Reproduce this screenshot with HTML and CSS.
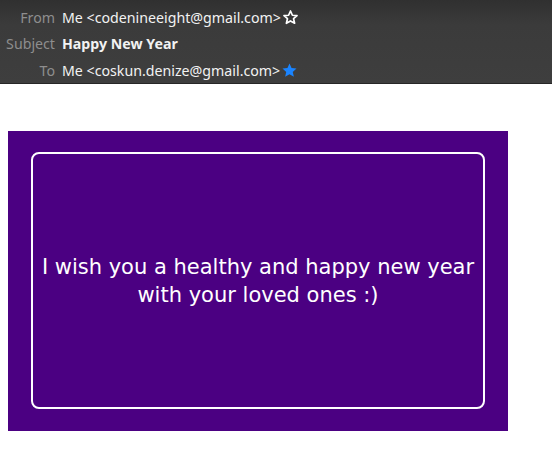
FILE: index.html
```html
<!DOCTYPE html>
<html>
<head>
<meta charset="utf-8">
<link rel="stylesheet" href="styles.css">
</head>
<body>
<header class="mail-header">
  <div class="row">
    <span class="label">From</span>
    <span class="value">Me &lt;codenineeight@gmail.com&gt;</span>
    <svg class="star" viewBox="0 0 24 24" width="17" height="17"><path d="M12 2.8l2.7 6 6.5.6-4.9 4.3 1.5 6.4L12 16.8l-5.8 3.3 1.5-6.4-4.9-4.3 6.5-.6z" fill="none" stroke="#ffffff" stroke-width="2.4" stroke-linejoin="round"/></svg>
  </div>
  <div class="row">
    <span class="label">Subject</span>
    <span class="value subject">Happy New Year</span>
  </div>
  <div class="row">
    <span class="label">To</span>
    <span class="value">Me &lt;coskun.denize@gmail.com&gt;</span>
    <svg class="star" viewBox="0 0 24 24" width="17" height="17"><path d="M12 2.2l2.9 6.4 7 .7-5.3 4.7 1.6 6.9L12 17.3l-6.2 3.6 1.6-6.9-5.3-4.7 7-.7z" fill="#1a84ff"/></svg>
  </div>
</header>
<main class="content">
  <div class="card">
    <div class="frame">
      <p class="message">I wish you a healthy and happy new year<br>with your loved ones :)</p>
    </div>
  </div>
</main>
</body>
</html>
```
FILE: styles.css
```css
html, body {
  margin: 0;
  padding: 0;
  background: #ffffff;
}
.mail-header {
  background: linear-gradient(#303030 0%, #3b3b3b 30%, #3e3e3e 100%);
  border-bottom: 1px solid #262626;
  height: 84px;
  box-sizing: border-box;
  padding-top: 4px;
  font-family: "Noto Sans", sans-serif;
  font-size: 14.2px;
}
.row {
  display: flex;
  align-items: center;
  height: 26.5px;
}
.label {
  width: 55px;
  text-align: right;
  color: #8e8e8e;
  margin-right: 7px;
}
.value {
  color: #f2f2f2;
}
.subject {
  font-weight: bold;
}
.star {
  display: block;
  margin-left: 1px;
}
.content {
  padding: 47px 8px 8px 8px;
}
.card {
  width: 500px;
  height: 300px;
  background: #4b0082;
  box-sizing: border-box;
  padding: 21px 23px 22px 23px;
}
.frame {
  height: 100%;
  box-sizing: border-box;
  border: 2px solid #ffffff;
  border-radius: 8px;
  display: flex;
  align-items: center;
  justify-content: center;
}
.message {
  margin: 0;
  color: #ffffff;
  font-family: "DejaVu Sans", sans-serif;
  font-size: 21px;
  line-height: 28px;
  text-align: center;
}
```
